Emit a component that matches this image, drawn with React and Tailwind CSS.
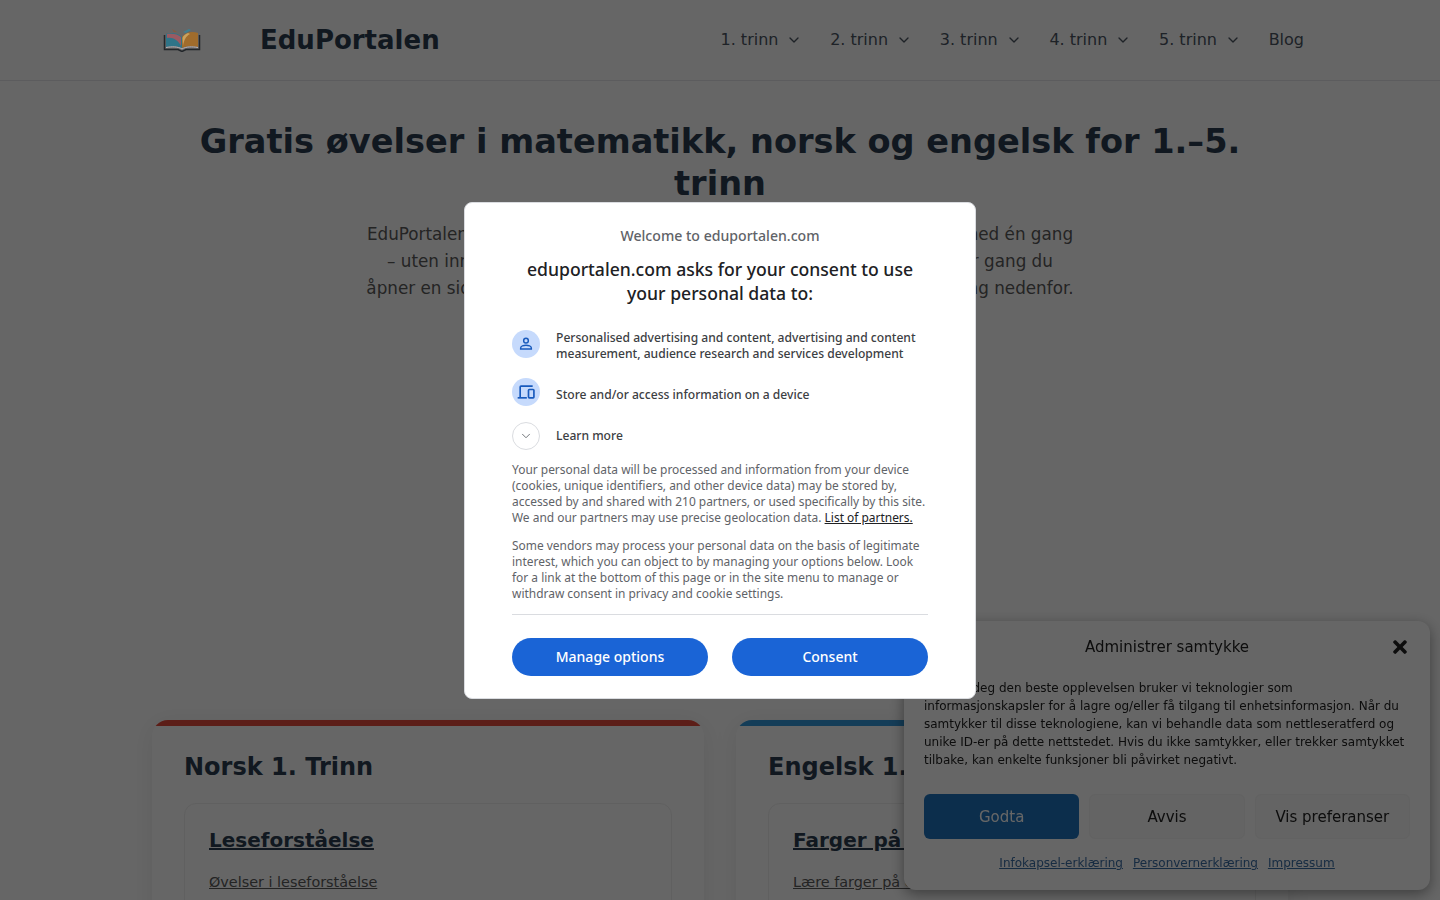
import React from 'react';
import { FiChevronDown } from 'react-icons/fi';
import { FaTimes } from 'react-icons/fa';

const grades = ['1. trinn', '2. trinn', '3. trinn', '4. trinn', '5. trinn'];

const BookLogo = () => (
    <svg width="38" height="24" viewBox="0 0 38 24" fill="none">
        <path d="M19 9 C15 5 8 4 3 6 L3 19 C8 18 15 18 19 20 Z" fill="#2f7488" />
        <path d="M19 9 C23 4 29 3 35 5 L35 19 C30 18 23 18 19 20 Z" fill="#a06c2c" />
        <path d="M18 9 C15 6 9 5 4 6 L4 10 C10 9 15 12 18 18 Z" fill="#9a5a62" />
        <path d="M20 18 C21 12 23 8 27 6 L25 5 C22 6 20 8 19.500 10 Z" fill="#c9a25e" />
        <path d="M9 1 L14 4 L11 4 Z" fill="#8a5a3c" />
        <path d="M20 4 L26 1 L28 2 L23 5 Z" fill="#3d7f90" />
        <path d="M1.500 7 L1.500 21.500 L15 21.500 L19 23.500 L23 21.500 L36.500 21.500 L36.500 7" stroke="#23272b" strokeWidth="1.500" />
        <path d="M3 19.500 C9 18.500 15 18.500 19 21 C23 18.500 29 18.500 35 19.500" stroke="#b9b4b8" strokeWidth="1" />
    </svg>
);

const SubjectCard = ({ title, topic, link, barClass }) => (
    <div className="relative h-[300px] overflow-hidden rounded-2xl bg-white px-8 pt-[29px] shadow-[0_4px_24px_rgba(0,0,0,0.08)]">
        <div className={`absolute top-0 left-0 right-0 h-1.5 ${barClass}`} />
        <h2 className="text-2xl leading-9 font-bold text-[#2c3e50]">{title}</h2>
        <div className="mt-[18px] rounded-xl border border-[#f0f0f0] bg-white px-6 pt-[21px] pb-5">
            <h3 className="text-xl leading-[30px] font-bold text-[#2c3e50] underline">{topic}</h3>
            <a className="mt-4 block text-[14.4px] leading-[22px] text-[#5a5a5a] underline">{link}</a>
        </div>
    </div>
);

const Purpose = ({ icon, textClass, children }) => (
    <div className="flex h-7 items-center gap-4">
        <div className="flex h-7 w-7 shrink-0 items-center justify-center rounded-full bg-[#c6dafc]">{icon}</div>
        <p className={`text-[12.1px] leading-4 font-medium text-[#3c4043] ${textClass}`}>{children}</p>
    </div>
);

const App = () => {
    return (
        <div className="relative h-screen overflow-hidden bg-white font-['DejaVu_Sans',sans-serif]">
            {/* Header */}
            <header className="h-[81px] border-b border-[#e5e7eb] bg-white">
                <div className="mx-auto flex h-full w-[1136px] items-center justify-between">
                    <div className="flex items-center">
                        <div className="relative z-40 ml-[11px] w-[97px]"><BookLogo /></div>
                        <span className="text-[26px] font-bold text-[#2c3e50]">EduPortalen</span>
                    </div>
                    <nav className="mr-[-16px] flex items-center gap-[29.700px] text-base text-[#4b5563]">
                        {grades.map((g) => (
                            <span key={g} className="flex items-center gap-2">
                                {g}
                                <FiChevronDown className="mr-[-2px] text-base" />
                            </span>
                        ))}
                        <span>Blog</span>
                    </nav>
                </div>
            </header>

            {/* Hero */}
            <section className="h-[639px] pt-[40px] text-center">
                <h1 className="mx-auto w-[1136px] text-[33.6px] leading-[42px] font-bold text-[#2c3e50]">
                    Gratis øvelser i matematikk, norsk og engelsk for 1.–5. trinn
                </h1>
                <p className="mx-auto mt-4 w-[760px] text-[16.8px] leading-[27px] text-[#5a5a5a]">
                    EduPortalen lar barn øve på matematikk, norsk og engelsk helt gratis, med én gang
                    <br />
                    – uten innlogging og uten abonnement. Du får helt nye oppgaver hver gang du
                    <br />
                    åpner en side. Velg deg et trinn og fag for å komme rett i gang med øving nedenfor.
                </p>
            </section>

            {/* Subject cards */}
            <section className="mx-auto grid w-[1136px] grid-cols-[552px_552px] gap-8">
                <SubjectCard title="Norsk 1. Trinn" topic="Leseforståelse" link="Øvelser i leseforståelse" barClass="bg-[#e74c3c]" />
                <SubjectCard title="Engelsk 1. Trinn" topic="Farger på engelsk" link="Lære farger på engelsk" barClass="bg-[#3498db]" />
            </section>

            {/* Cookie panel */}
            <div className="fixed right-[10px] bottom-[10px] w-[526px] rounded-[12px] bg-white px-5 pt-[14px] pb-[19px] shadow-[0_4px_14px_rgba(0,0,0,0.4)]">
                <div className="relative text-center text-[15px] leading-6 text-[#222]">
                    Administrer samtykke
                    <FaTimes className="absolute right-0 top-[2px] text-xl" />
                </div>
                <p className="mt-5 text-xs leading-[18px] text-[#222]">
                    For å gi deg den beste opplevelsen bruker vi teknologier som informasjonskapsler for å lagre og/eller få tilgang til enhetsinformasjon. Når du samtykker til disse teknologiene, kan vi behandle data som nettleseratferd og unike ID-er på dette nettstedet. Hvis du ikke samtykker, eller trekker samtykket tilbake, kan enkelte funksjoner bli påvirket negativt.
                </p>
                <div className="mt-[25px] grid grid-cols-3 gap-[10px]">
                    <button className="h-[45px] rounded-md bg-[#1e73be] pt-px text-[15px] text-white">Godta</button>
                    <button className="h-[45px] rounded-md border border-[#f5f5f5] bg-[#f9f9f9] pt-px text-[15px] text-[#222]">Avvis</button>
                    <button className="h-[45px] rounded-md border border-[#f5f5f5] bg-[#f9f9f9] pt-px text-[15px] text-[#222]">Vis preferanser</button>
                </div>
                <div className="mt-4 flex justify-center gap-[10px] text-xs leading-4 text-[#3b6ea5] underline">
                    <a>Infokapsel-erklæring</a>
                    <a>Personvernerklæring</a>
                    <a>Impressum</a>
                </div>
            </div>

            {/* Dim overlay */}
            <div className="fixed inset-0 z-30 bg-black/60" />

            {/* Consent dialog */}
            <div className="fixed inset-0 z-50 flex items-center justify-center">
                <div className="h-[497px] w-[512px] rounded-lg border border-[#dadce0] bg-white px-[47px] pt-[23px] font-['Noto_Sans',sans-serif]">
                    <p className="text-center text-[14.100px] leading-5 font-medium text-[#5f6368]">Welcome to eduportalen.com</p>
                    <h2 className="mt-[11px] text-center text-[17.600px] leading-6 font-medium text-[#202124]">
                        eduportalen.com asks for your consent to use your personal data to:
                    </h2>
                    <div className="mt-[25px] flex flex-col gap-5">
                        <Purpose
                            textClass="pt-1"
                            icon={
                                <svg width="16" height="16" viewBox="0 0 24 24" fill="none" stroke="#185abc" strokeWidth="2.200">
                                    <circle cx="12" cy="7" r="3.500" />
                                    <path d="M4 19.500v-1.500c0-2.500 4.500-4 8-4s8 1.500 8 4v1.500Z" />
                                </svg>
                            }
                        >
                            Personalised advertising and content, advertising and content measurement, audience research and services development
                        </Purpose>
                        <Purpose
                            textClass="pt-[6px]"
                            icon={
                                <svg width="20" height="20" viewBox="0 0 24 24" fill="none" stroke="#185abc" strokeWidth="2">
                                    <path d="M20 5H6a1 1 0 0 0-1 1v12" />
                                    <path d="M2 19h11" />
                                    <rect x="15" y="9" width="6.500" height="10" rx="1" />
                                </svg>
                            }
                        >
                            Store and/or access information on a device
                        </Purpose>
                    </div>
                    <div className="mt-4 flex items-center gap-4">
                        <div className="flex h-7 w-7 shrink-0 items-center justify-center rounded-full border border-[#dadce0] text-[#5f6368]">
                            <FiChevronDown className="text-sm" strokeWidth={1.500} />
                        </div>
                        <span className="text-[12.1px] leading-4 font-medium text-[#3c4043]">Learn more</span>
                    </div>
                    <p className="mt-3 text-[11.950px] leading-4 text-[#5f6368]">
                        Your personal data will be processed and information from your device (cookies, unique identifiers, and other device data) may be stored by, accessed by and shared with 210 partners, or used specifically by this site. We and our partners may use precise geolocation data. <a className="text-[#202124] underline">List of partners.</a>
                    </p>
                    <p className="mt-3 text-[11.950px] leading-4 text-[#5f6368]">
                        Some vendors may process your personal data on the basis of legitimate interest, which you can object to by managing your options below. Look for a link at the bottom of this page or in the site menu to manage or withdraw consent in privacy and cookie settings.
                    </p>
                    <div className="mt-3 border-t border-[#dadce0]" />
                    <div className="mt-[23px] grid grid-cols-2 gap-6">
                        <button className="h-[38px] rounded-full bg-[#1a64d6] text-sm font-medium text-white">Manage options</button>
                        <button className="h-[38px] rounded-full bg-[#1a64d6] text-sm font-medium text-white">Consent</button>
                    </div>
                </div>
            </div>
        </div>
    );
};

export default App;
